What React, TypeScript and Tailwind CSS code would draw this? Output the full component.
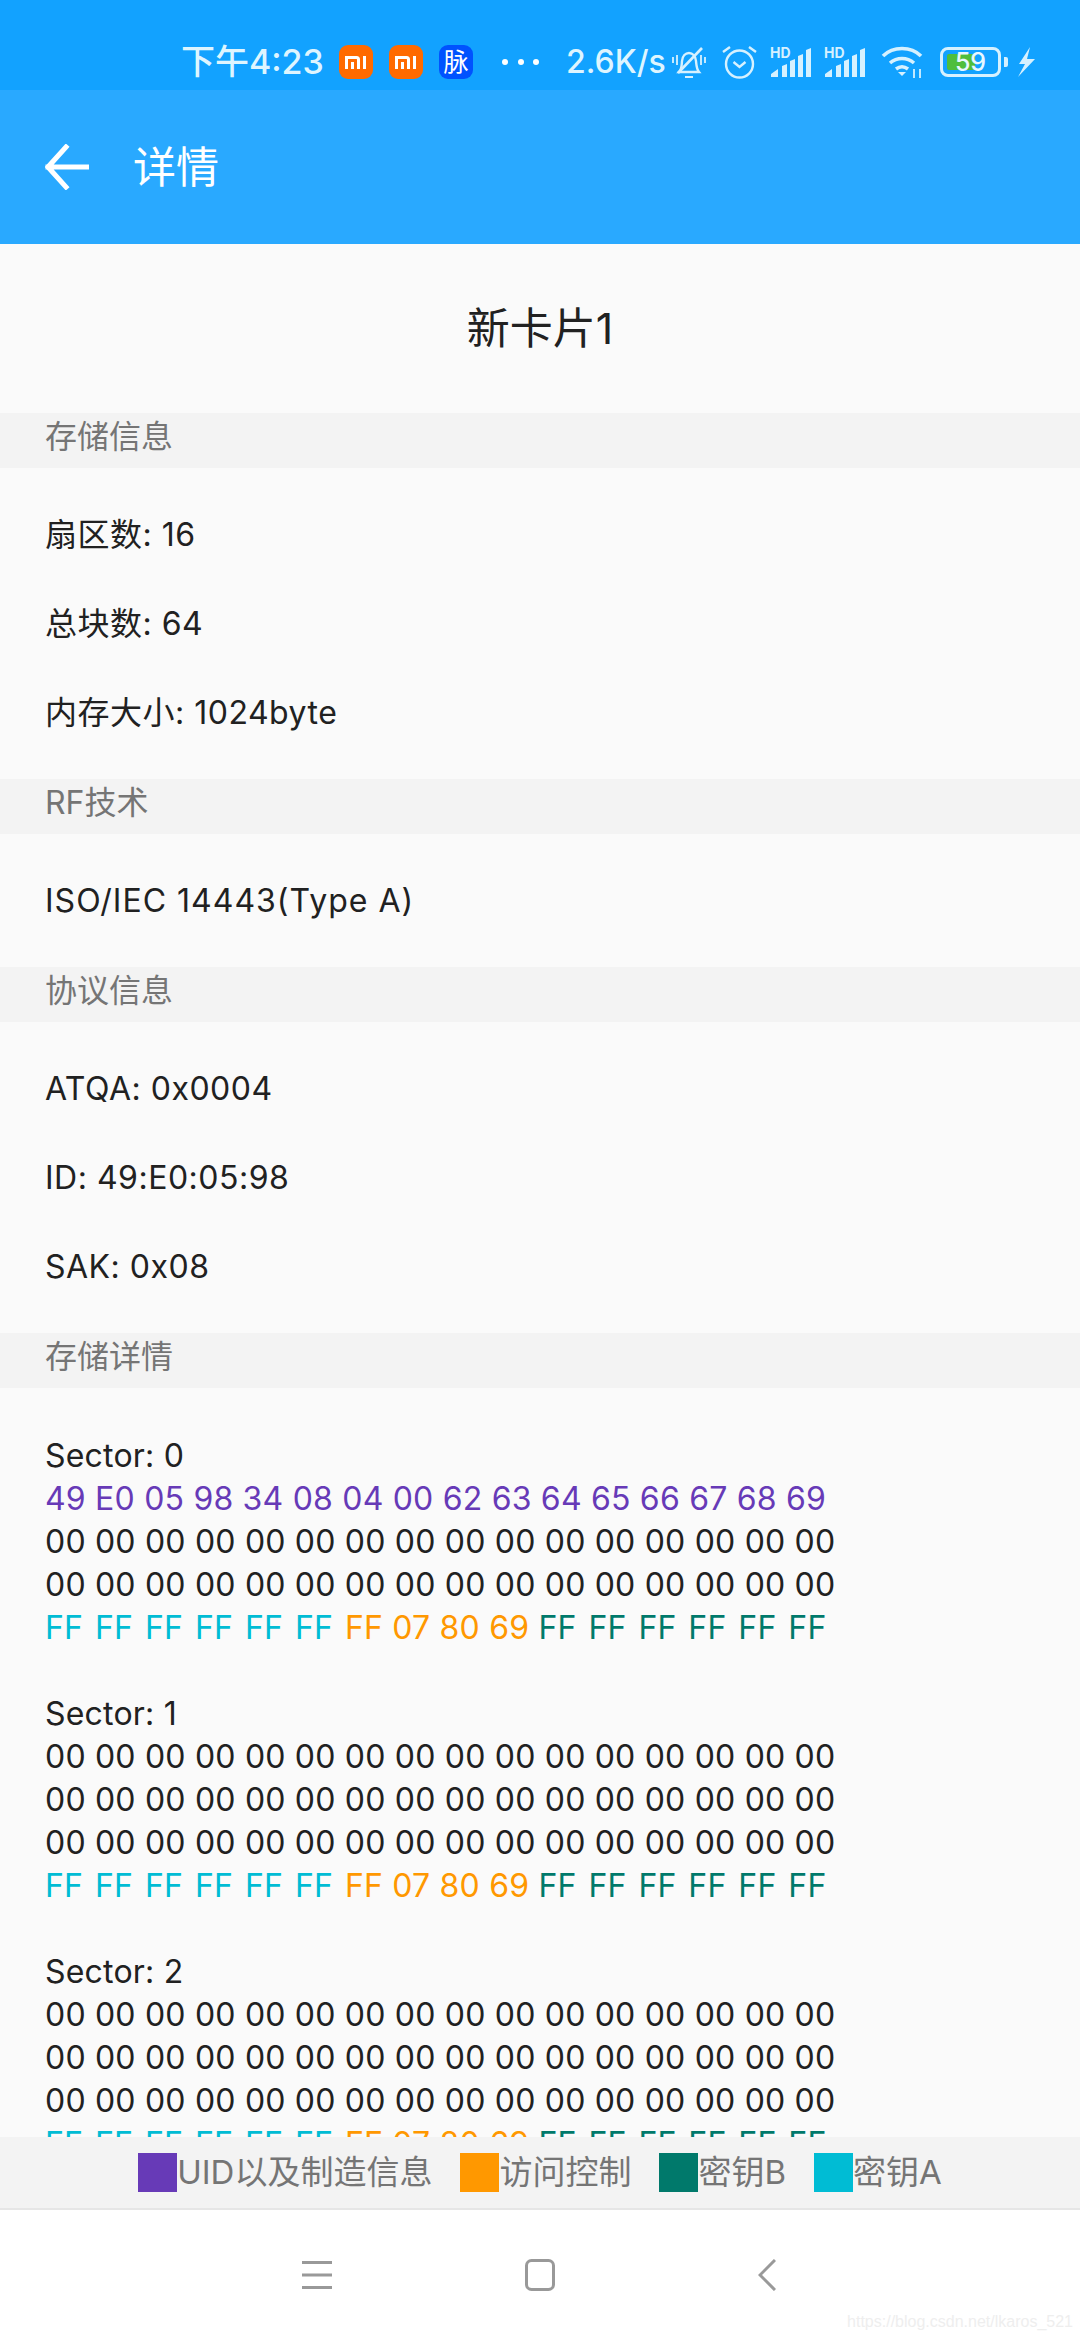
const FONT = "font-['Inter','Noto_Sans_CJK_SC',sans-serif]"

const ZERO_ROW = '00 00 00 00 00 00 00 00 00 00 00 00 00 00 00 00'

function Section({ title }: { title: string }) {
  return <div className="h-[55px] bg-[#f3f3f3] pl-[45px] text-[32px] leading-[48px] text-[#757575]">{title}</div>
}

function InfoRows({ rows, tracking = 'tracking-[0.5px]' }: { rows: string[]; tracking?: string }) {
  return (
    <div className="py-[22px]">
      {rows.map((r) => (
        <div key={r} className={`h-[89px] pl-[45px] text-[32px] leading-[89px] text-[#212121] ${tracking}`}>{r}</div>
      ))}
    </div>
  )
}

function KeyRow() {
  return (
    <div className="h-[43px]">
      <span className="text-[#00bcd4] [word-spacing:2.6px]">FF FF FF FF FF FF </span>
      <span className="text-[#ff9800]">FF 07 80 69 </span>
      <span className="text-[#00796b] [word-spacing:2.6px]">FF FF FF FF FF FF</span>
    </div>
  )
}

function Sector({ n, first }: { n: number; first?: string }) {
  return (
    <div className="mb-[43px] text-[32px] leading-[43px] tracking-[0.2px] text-[#212121]">
      <div className="h-[43px]">Sector: {n}</div>
      <div className="h-[43px]">
        {first ? <span className="text-[#673ab7]">{first}</span> : ZERO_ROW}
      </div>
      <div className="h-[43px]">{ZERO_ROW}</div>
      <div className="h-[43px]">{ZERO_ROW}</div>
      <KeyRow />
    </div>
  )
}

function Legend({ color, label, className }: { color: string; label: string; className: string }) {
  return (
    <div className={`flex items-center ${className}`}>
      <div className={`h-[39px] w-[39px] ${color}`} />
      <span className="text-[33px] leading-[39px] text-[#757575]">{label}</span>
    </div>
  )
}

function MiIcon() {
  return (
    <div className="flex h-[34px] w-[34px] items-center justify-center rounded-[9px] bg-[#ff6a00]">
      <svg width="22" height="13" viewBox="0 0 22 13" fill="none" stroke="#fff" strokeWidth="3">
        <path d="M1.500 13V1.500H11.500a2 2 0 0 1 2 2V13M7.500 13V6" />
        <path d="M19.500 0V13" />
      </svg>
    </div>
  )
}

function Signal() {
  return (
    <div className="relative h-[30px] w-[41px]">
      <span className="absolute left-0 top-0 text-[14px] font-bold leading-[12px] text-[#d6f1ff]">HD</span>
      <svg className="absolute inset-0" width="41" height="30" viewBox="0 0 41 30" fill="#d6f1ff">
        <path d="M1 30v-3l7-5v8zM12 30V19l5-2v13zM20 30V14l5-2v18zM28 30V9l5-2v23zM36 30V3l5-2v29z" />
      </svg>
    </div>
  )
}

function StatusBar() {
  return (
    <div className="flex h-[90px] shrink-0 items-center bg-[#12a2ff] pl-[181px] pt-[34px] text-[#def5ff]">
      <span className="w-[158px] whitespace-nowrap text-[34px] font-medium leading-[40px]">下午4:23</span>
      <MiIcon />
      <div className="ml-[16px]"><MiIcon /></div>
      <div className="ml-[16px] flex h-[34px] w-[34px] items-center justify-center rounded-[9px] bg-[#0052ff] text-[25px] leading-none text-white">脉</div>
      <div className="ml-[29px] flex w-[37px] justify-between">
        <i className="h-[6px] w-[6px] rounded-full bg-white" />
        <i className="h-[6px] w-[6px] rounded-full bg-white" />
        <i className="h-[6px] w-[6px] rounded-full bg-white" />
      </div>
      <span className="ml-[27px] w-[106px] whitespace-nowrap text-[32px] font-medium leading-[40px]">2.6K/s</span>
      {/* muted bell */}
      <svg width="34" height="33" viewBox="0 0 34 33" fill="none" stroke="#d6f1ff" strokeWidth="2.400">
        <path d="M7 26c3-3 2.500-6 3-11 .5-5 3.500-8 7-8s6.500 3 7 8c.5 5 .5 8 3 11z" />
        <path d="M6 27L30 2" strokeWidth="2.600" />
        <path d="M13 31h8M1 11v6M5 9v10M33 11v6M29 9v10" strokeWidth="1.800" />
      </svg>
      {/* alarm */}
      <svg className="ml-[16px]" width="35" height="34" viewBox="0 0 35 34" fill="none" stroke="#d6f1ff" strokeWidth="2.400">
        <circle cx="17.500" cy="19" r="13.500" />
        <path d="M11.500 17l6 5 6-5M1 7l7-5M34 7l-7-5" />
      </svg>
      <div className="ml-[13px]"><Signal /></div>
      <div className="ml-[13px]"><Signal /></div>
      {/* wifi */}
      <svg className="ml-[16px]" width="43" height="34" viewBox="0 0 43 34" fill="none" stroke="#d6f1ff" strokeWidth="3.600">
        <path d="M2 11C12 1 30 1 40 11M9 18c7-6 17-6 24 0M15 24c4-3 8-3 12 0" />
        <path d="M17 27h8l-4 4z" fill="#d6f1ff" stroke="none" />
        <path d="M33 24v9M39 24v9" strokeWidth="1.800" />
      </svg>
      {/* battery */}
      <div className="relative ml-[16px] h-[30px] w-[61px] rounded-[8px] border-[3px] border-[#d6f1ff]">
        <div className="absolute bottom-[4px] left-[4px] top-[4px] w-[28px] rounded-[2px] bg-[#4fbe3c]" />
        <span className="absolute inset-0 text-center text-[25px] font-medium leading-[24px] text-[#e8f8ff]">59</span>
      </div>
      <div className="ml-[3px] h-[10px] w-[4px] rounded-r-[2px] bg-[#d6f1ff]" />
      <svg className="ml-[8px]" width="19" height="30" viewBox="0 0 19 30" fill="#d6f1ff">
        <path d="M14 0L3 17l6 0-7 13 17-18-8 0z" />
      </svg>
    </div>
  )
}

export default function App() {
  return (
    <div className={`relative flex h-[2340px] w-[1080px] flex-col overflow-hidden bg-white ${FONT}`}>
      <StatusBar />

      <div className="flex h-[154px] shrink-0 items-center bg-[#29a9ff] pl-[45px]">
        <svg width="44" height="46" viewBox="0 0 44 46" fill="none" stroke="#fff" strokeWidth="5" strokeLinecap="square">
          <path d="M3 23H42M21 3L3 23l18 20" />
        </svg>
        <span className="ml-[44px] text-[43px] leading-[50px] text-white">详情</span>
      </div>

      <div className="min-h-0 flex-1 overflow-hidden bg-[#fafafa]">
        <div className="h-[169px] text-center text-[43px] leading-[169px] text-[#212121]">新卡片1</div>

        <Section title="存储信息" />
        <InfoRows rows={['扇区数: 16', '总块数: 64', '内存大小: 1024byte']} />

        <Section title="RF技术" />
        <InfoRows rows={['ISO/IEC 14443(Type A)']} tracking="tracking-[1px]" />

        <Section title="协议信息" />
        <InfoRows rows={['ATQA: 0x0004', 'ID: 49:E0:05:98', 'SAK: 0x08']} />

        <Section title="存储详情" />
        <div className="pl-[45px] pt-[46px]">
          <Sector n={0} first="49 E0 05 98 34 08 04 00 62 63 64 65 66 67 68 69" />
          <Sector n={1} />
          <Sector n={2} />
        </div>
      </div>

      <div className="flex h-[73px] shrink-0 items-center justify-center border-b-2 border-[#e6e6e6] bg-[#f3f3f3]">
        <Legend color="bg-[#673ab7]" label="UID以及制造信息" className="" />
        <Legend color="bg-[#ff9800]" label="访问控制" className="ml-[28px]" />
        <Legend color="bg-[#00796b]" label="密钥B" className="ml-[28px]" />
        <Legend color="bg-[#00bcd4]" label="密钥A" className="ml-[28px]" />
      </div>

      <div className="flex h-[130px] shrink-0 items-center bg-white pb-[1px] pl-[302px]">
        <svg width="30" height="28" viewBox="0 0 30 28" fill="none" stroke="#999" strokeWidth="3">
          <path d="M0 1.500H30M0 14H30M0 26.500H30" />
        </svg>
        <svg className="ml-[193px]" width="30" height="32" viewBox="0 0 30 32" fill="none" stroke="#999" strokeWidth="3">
          <rect x="1.500" y="1.500" width="27" height="29" rx="5" />
        </svg>
        <svg className="ml-[203px]" width="18" height="32" viewBox="0 0 18 32" fill="none" stroke="#999" strokeWidth="3">
          <path d="M17 1L2 16l15 15" />
        </svg>
      </div>

      <span className="absolute bottom-[7px] right-[7px] font-['Liberation_Sans',sans-serif] text-[16px] leading-[22px] text-[#eeeeee]">https://blog.csdn.net/lkaros_521</span>
    </div>
  )
}
